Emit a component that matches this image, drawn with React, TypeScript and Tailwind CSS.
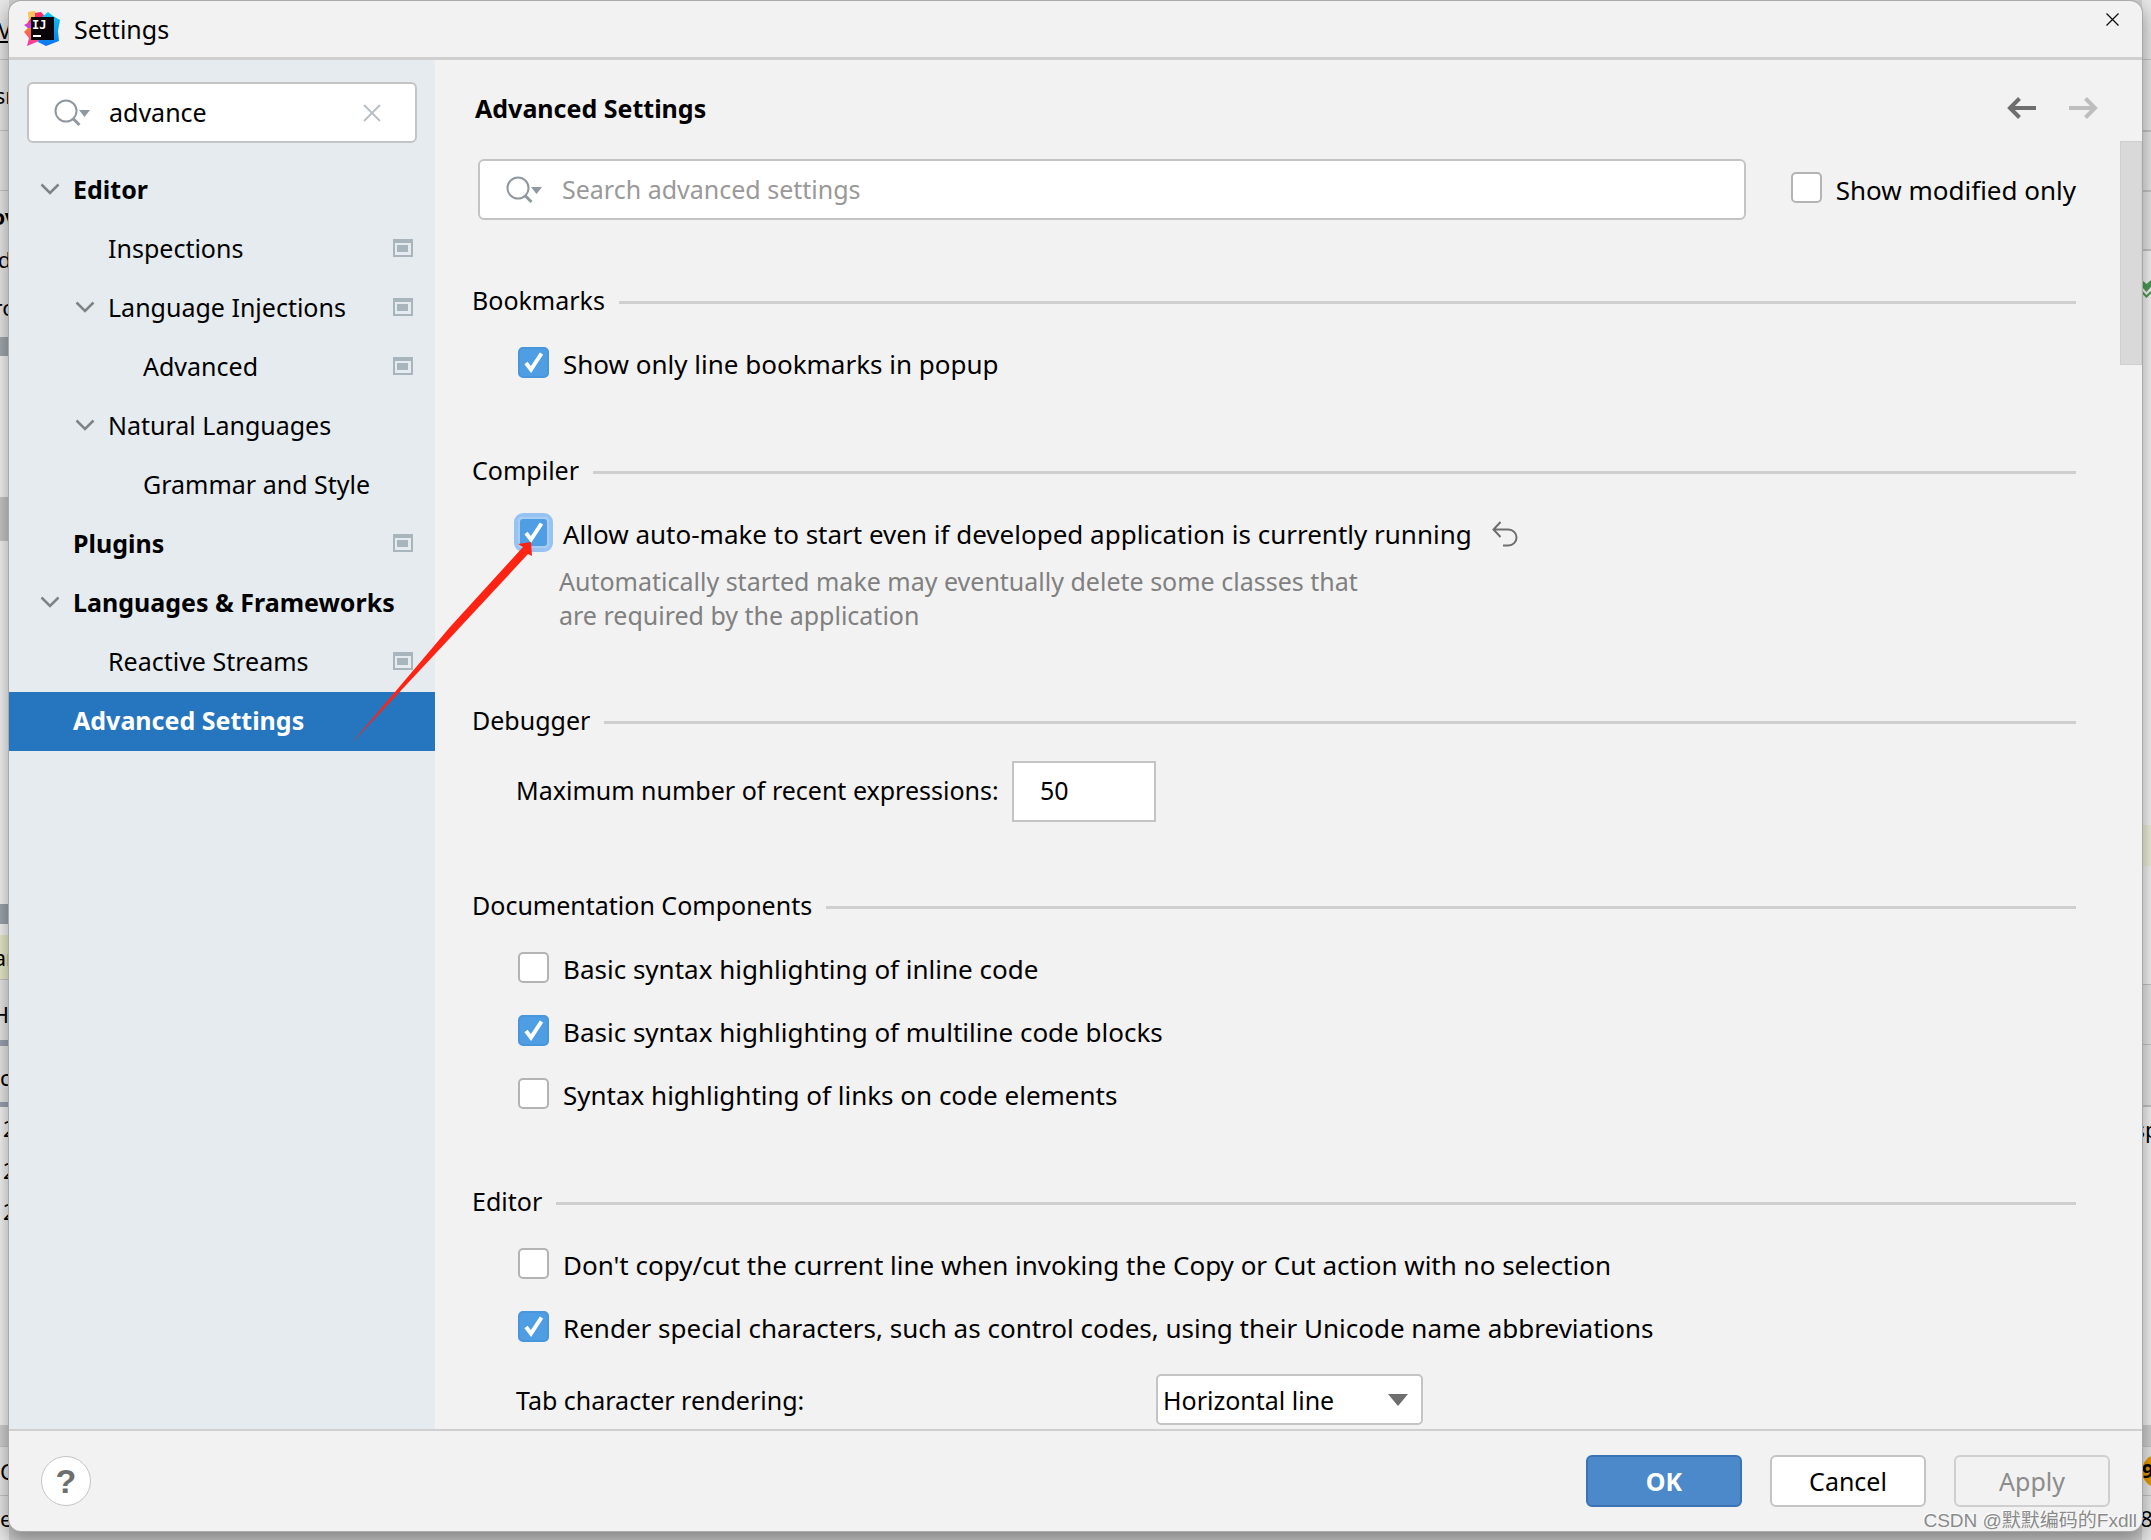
import React from 'react';
import clsx from 'clsx';

type TreeNode = {
	label: string;
	level: 0 | 1 | 2;
	open?: boolean;
	project?: boolean;
	selected?: boolean;
};

type Strip = {
	h: string;
	bg?: string;
	text?: string;
	cls?: string;
	node?: React.ReactNode;
};

const tree: TreeNode[] = [
	{ label: 'Editor', level: 0, open: true },
	{ label: 'Inspections', level: 1, project: true },
	{ label: 'Language Injections', level: 1, open: true, project: true },
	{ label: 'Advanced', level: 2, project: true },
	{ label: 'Natural Languages', level: 1, open: true },
	{ label: 'Grammar and Style', level: 2 },
	{ label: 'Plugins', level: 0, project: true },
	{ label: 'Languages & Frameworks', level: 0, open: true },
	{ label: 'Reactive Streams', level: 1, project: true },
	{ label: 'Advanced Settings', level: 0, selected: true },
];

// slices of the IDE window that stay visible on both sides of the dialog
const leftStrips: Strip[] = [
	{ h: 'h-[60px] border-b', text: 'V', cls: 'justify-center underline' },
	{ h: 'h-[71px] border-b', text: 'sr', cls: 'justify-center' },
	{ h: 'h-[60px] border-b' },
	{ h: 'h-[50px]', text: 'ov', cls: 'justify-center font-bold' },
	{ h: 'h-[36px]', text: 'd', cls: 'justify-center' },
	{ h: 'h-[60px]', text: 'ro', cls: 'justify-center' },
	{ h: 'h-[19px]', bg: 'bg-[#a0a8ae]' },
	{ h: 'h-[141px]', bg: 'bg-[#f2f2f2]' },
	{ h: 'h-[44px]', bg: 'bg-[#c6c6c6]' },
	{ h: 'h-[363px]', bg: 'bg-[#f2f2f2]' },
	{ h: 'h-[20px]', bg: 'bg-[#9ca5ad]' },
	{ h: 'h-[11px]', bg: 'bg-[#f2f2f2]' },
	{ h: 'h-[44px]', bg: 'bg-[#e8e8c8]', text: 'ar', cls: 'justify-center' },
	{ h: 'h-[61px] border-t pt-[8px]', text: 'H', cls: 'justify-end' },
	{ h: 'h-[6px]', bg: 'bg-[#9aa2b0]' },
	{ h: 'h-[56px] pt-[6px]', text: 'c' },
	{ h: 'h-[5px]', bg: 'bg-[#9aa2b0]' },
	{ h: 'h-[42px]', bg: 'bg-[#f2f2f2]', text: '2', cls: 'pl-[3px]' },
	{ h: 'h-[41px]', bg: 'bg-[#f2f2f2]', text: '2', cls: 'pl-[3px]' },
	{ h: 'h-[41px]', bg: 'bg-[#f2f2f2]', text: '2', cls: 'pl-[3px]' },
	{ h: 'h-[194px]', bg: 'bg-[#f2f2f2]' },
	{ h: 'h-[22px] border-b', bg: 'bg-[#cfcfcf]' },
	{ h: 'h-[49px] border-b', text: 'C' },
	{ h: 'h-[44px]', text: 'e' },
];

const rightStrips: Strip[] = [
	{ h: 'h-[60px] border-b' },
	{ h: 'h-[72px] border-b-2' },
	{ h: 'h-[60px] border-b-2' },
	{ h: 'h-[59px] border-b-2' },
	{
		h: 'h-[76px]',
		bg: 'bg-[#f4f4f4]',
		node: (
			<svg width="9" height="20" viewBox="0 0 9 20" className="shrink-0">
				<path d="M0 1 4.500 5 9 1V8L4.500 13 0 8Z" fill="#499c54" />
				<path d="M0 13 4.500 17.500 9 13" fill="none" stroke="#499c54" strokeWidth="2" />
			</svg>
		),
	},
	{ h: 'h-[498px]', bg: 'bg-[#f4f4f4]' },
	{ h: 'h-[41px]', bg: 'bg-[#eeeedb]' },
	{ h: 'h-[119px] border-b', bg: 'bg-[#f2f2f2]' },
	{ h: 'h-[60px] border-b' },
	{ h: 'h-[62px] border-b-2' },
	{ h: 'h-[44px]', bg: 'bg-[#f2f2f2]', text: 'sp', cls: 'justify-center' },
	{ h: 'h-[274px]', bg: 'bg-[#f2f2f2]' },
	{ h: 'h-[22px] border-b', bg: 'bg-[#cfcfcf]' },
	{
		h: 'h-[49px] border-b',
		node: (
			<span className="flex size-[34px] shrink-0 items-center rounded-full bg-[#e59700] text-[20px] font-bold">9</span>
		),
	},
	{ h: 'h-[44px]', text: '8', cls: 'justify-center' },
];

function Strips({ items }: { items: Strip[] }) {
	return (
		<div className="w-[9px] overflow-hidden">
			{items.map((s, i) => (
				<div
					key={i}
					className={clsx(
						'flex items-center overflow-hidden border-[#c4c4c4] text-[22px]',
						s.h,
						s.cls,
						s.bg ?? 'bg-[#e6e6e6]'
					)}
				>
					{s.node}
					{s.text}
				</div>
			))}
		</div>
	);
}

function IdeaLogo() {
	return (
		<svg width="36" height="36" viewBox="0 0 36 36" aria-hidden="true">
			<defs>
				<linearGradient id="warm" x1="0" y1="0" x2="0" y2="1">
					<stop offset="0" stopColor="#fcd84a" />
					<stop offset="0.5" stopColor="#fb7a2a" />
					<stop offset="1" stopColor="#f72fb5" />
				</linearGradient>
				<linearGradient id="cool" x1="0" y1="0" x2="0" y2="1">
					<stop offset="0" stopColor="#12c9f2" />
					<stop offset="1" stopColor="#0a74f0" />
				</linearGradient>
			</defs>
			<path d="M4 1 11 0 14 18 20 28 3 35 5 27 0 21 4 17 1 14 5 10Z" fill="url(#warm)" />
			<path d="M10 2 17 1 24 9 16 14 3 15 5 9Z" fill="#fb2b68" />
			<path d="M4 1 11 0 11 6 7 7 5 10Z" fill="#fbc35c" />
			<path d="M0 14 9 10 9 17 4 17Z" fill="#d43fd8" />
			<path d="M24 1 29 5 36 9 34 20 35 30 22 35 14 31 20 14 18 6Z" fill="url(#cool)" />
			<rect x="7" y="6" width="23" height="23" fill="#0b0408" />
			<text x="8" y="18" fontSize="12" fontWeight="700" fontFamily="'DejaVu Sans Mono', monospace" fill="#fff">
				IJ
			</text>
			<rect x="9" y="24" width="8" height="2" fill="#fff" />
		</svg>
	);
}

function SearchIcon() {
	return (
		<svg width="36" height="28" viewBox="0 0 36 28" aria-hidden="true">
			<circle cx="12" cy="12" r="10.5" fill="none" stroke="#8f989e" strokeWidth="2" />
			<path d="M19 19.500 25.500 26" stroke="#8f989e" strokeWidth="3" />
			<path d="M25 11H36L30.500 18Z" fill="#8f989e" />
		</svg>
	);
}

function Chevron() {
	return (
		<svg width="20" height="12" viewBox="0 0 20 12" aria-hidden="true">
			<path d="M1.500 1.500 10 10 18.500 1.500" fill="none" stroke="#7f8386" strokeWidth="2.500" />
		</svg>
	);
}

function ProjectIcon() {
	return (
		<svg width="20" height="18" viewBox="0 0 20 18" className="ml-auto" aria-hidden="true">
			<path d="M0 0H20V18H0ZM2 4V16H18V4Z" fill="#a9b5bd" fillRule="evenodd" />
			<rect x="4" y="6" width="11" height="7" fill="#a9b5bd" />
		</svg>
	);
}

type CheckProps = {
	label: string;
	checked?: boolean;
	focused?: boolean;
	children?: React.ReactNode;
};

function Check({ label, checked, focused, children }: CheckProps) {
	return (
		<div className="flex h-[60px] items-center pl-[2px] text-[26px]">
			<label className="flex items-center gap-[14px]">
				<span className="mb-[4px] grid place-items-center">
					<input
						type="checkbox"
						defaultChecked={checked}
						className={clsx(
							'peer col-start-1 row-start-1 size-[31px] appearance-none rounded-[5px] border-2 border-[#b4b4b4] bg-white checked:bg-[#4f9ee3]',
							focused ? 'outline-4 outline-[#97c3f3] checked:border-[#a8cdf5]' : 'checked:border-[#4896dc]'
						)}
					/>
					<svg
						width="20"
						height="22"
						viewBox="0 0 20 22"
						className="pointer-events-none invisible col-start-1 row-start-1 peer-checked:visible"
						aria-hidden="true"
					>
						<path d="M2 12 7 18.500 17.500 2.500" fill="none" stroke="#fff" strokeWidth="4" />
					</svg>
				</span>
				{label}
			</label>
			{children}
		</div>
	);
}

function Section({ title, children }: { title: string; children: React.ReactNode }) {
	return (
		<section className="mb-[58px] last:mb-0">
			<div className="mb-[16px] flex items-center gap-[14px]">
				<h2>{title}</h2>
				<div className="mt-[5px] h-[3px] flex-1 bg-[#cfcfcf]" />
			</div>
			<div className="flex flex-col gap-[3px] pl-[44px]">{children}</div>
		</section>
	);
}

function Sidebar() {
	return (
		<aside className="w-[426px] shrink-0 bg-[#e5ebee] pt-[22px]">
			<div className="mx-[18px] mb-[18px] flex h-[61px] items-center rounded-[6px] border-2 border-[#c4c4c4] bg-white pl-[25px] pr-[34px]">
				<SearchIcon />
				<input
					type="text"
					aria-label="Search settings"
					defaultValue="advance"
					className="ml-[19px] min-w-0 flex-1 pb-[2px] outline-none"
				/>
				<button aria-label="Clear search">
					<svg width="18" height="18" viewBox="0 0 18 18">
						<path d="M1 1 17 17M17 1 1 17" stroke="#b9c0c5" strokeWidth="2" />
					</svg>
				</button>
			</div>
			<ul>
				{tree.map((node) => (
					<li key={node.label}>
						<button
							className={clsx(
								'flex h-[59px] w-full items-center pb-[4px] pr-[22px] text-left',
								node.level === 0 && 'pl-[31px] font-bold',
								node.level === 1 && 'pl-[66px]',
								node.level === 2 && 'pl-[101px]',
								node.selected && 'bg-[#2675bf] text-white'
							)}
						>
							<span className="w-[33px] shrink-0">{node.open && <Chevron />}</span>
							<span className="whitespace-nowrap">{node.label}</span>
							{node.project && <ProjectIcon />}
						</button>
					</li>
				))}
			</ul>
		</aside>
	);
}

function Content() {
	return (
		<main className="flex min-w-0 flex-1 flex-col">
			<header className="flex h-[81px] items-center pl-[40px] pr-[44px] pt-[15px]">
				<h1 className="flex-1 font-bold">Advanced Settings</h1>
				<button aria-label="Back">
					<svg width="30" height="22" viewBox="0 0 30 22">
						<path d="M12.500 1.500 3 11 12.500 20.500M3 11H29" fill="none" stroke="#6e6e6e" strokeWidth="4" />
					</svg>
				</button>
				<button aria-label="Forward" disabled className="ml-[31px]">
					<svg width="30" height="22" viewBox="0 0 30 22">
						<path d="M17.500 1.500 27 11 17.500 20.500M27 11H1" fill="none" stroke="#bebebe" strokeWidth="4" />
					</svg>
				</button>
			</header>
			<div className="flex flex-1">
				<div className="min-w-0 flex-1 pb-[4px] pl-[37px] pr-[44px] pt-[18px]">
					<div className="mb-[62px] flex items-center pl-[6px]">
						<div className="flex h-[61px] flex-1 items-center rounded-[6px] border-2 border-[#c4c4c4] bg-white pl-[26px]">
							<SearchIcon />
							<input
								type="text"
								aria-label="Search advanced settings"
								placeholder="Search advanced settings"
								className="ml-[20px] min-w-0 flex-1 pb-[2px] outline-none placeholder:text-[#999999]"
							/>
						</div>
						<div className="ml-[43px]">
							<Check label="Show modified only" />
						</div>
					</div>

					<Section title="Bookmarks">
						<Check label="Show only line bookmarks in popup" checked />
					</Section>

					<Section title="Compiler">
						<Check label="Allow auto-make to start even if developed application is currently running" checked focused>
							<button aria-label="Reset to default" className="ml-[20px]">
								<svg width="26" height="26" viewBox="0 0 26 26">
									<path
										d="M8.500 1 1.500 8.500 8.500 16M1.500 8.500H16.500A8 8 0 0 1 16.500 24.500H11"
										fill="none"
										stroke="#6e6e6e"
										strokeWidth="2"
									/>
								</svg>
							</button>
						</Check>
						<p className="-mt-[3px] pb-[12px] pl-[43px] leading-[34px] text-[#808080]">
							Automatically started make may eventually delete some classes that
							<br />
							are required by the application
						</p>
					</Section>

					<Section title="Debugger">
						<div className="flex items-center pb-[7px] pt-[7px]">
							<label htmlFor="recent" className="w-[496px] pb-[3px]">
								Maximum number of recent expressions:
							</label>
							<input
								id="recent"
								type="text"
								defaultValue="50"
								className="h-[61px] w-[144px] border-2 border-[#c4c4c4] bg-white pb-[3px] pl-[26px] outline-none"
							/>
						</div>
					</Section>

					<Section title="Documentation Components">
						<Check label="Basic syntax highlighting of inline code" />
						<Check label="Basic syntax highlighting of multiline code blocks" checked />
						<Check label="Syntax highlighting of links on code elements" />
					</Section>

					<Section title="Editor">
						<Check label="Don't copy/cut the current line when invoking the Copy or Cut action with no selection" />
						<Check label="Render special characters, such as control codes, using their Unicode name abbreviations" checked />
						<div className="flex items-center pt-[13px]">
							<label htmlFor="tab-char" className="w-[640px]">
								Tab character rendering:
							</label>
							<div className="grid items-center">
								<select
									id="tab-char"
									defaultValue="Horizontal line"
									className="col-start-1 row-start-1 h-[51px] w-[267px] appearance-none rounded-[5px] border-2 border-[#c4c4c4] bg-white pl-[5px]"
								>
									<option>Horizontal line</option>
								</select>
								<svg
									width="20"
									height="12"
									viewBox="0 0 20 12"
									className="pointer-events-none col-start-1 row-start-1 mr-[15px] justify-self-end"
									aria-hidden="true"
								>
									<path d="M0 0H20L10 12Z" fill="#6e6e6e" />
								</svg>
							</div>
						</div>
					</Section>
				</div>
				<div className="h-[224px] w-[22px] border border-[#cfcfcf] bg-[#d9d9d9]" />
			</div>
		</main>
	);
}

export default function App() {
	return (
		<div className="relative flex min-h-screen flex-col overflow-hidden bg-[#cfcfcf] px-[9px] pb-[9px] pt-px font-['Noto_Sans','Noto_Sans_CJK_SC',sans-serif] text-[25px] leading-[36px] text-black">
			<div className="absolute inset-0 flex justify-between" aria-hidden="true">
				<Strips items={leftStrips} />
				<Strips items={rightStrips} />
			</div>

			<div className="relative flex flex-1 flex-col overflow-hidden rounded-[12px] bg-[#f2f2f2] shadow-[0_0_0_1px_#a9a9a9,0_8px_18px_2px_rgba(0,0,0,0.35)]">
				<div className="flex h-[59px] items-center border-b-3 border-[#cfcfcf] pl-[15px] pr-[23px]">
					<IdeaLogo />
					<span className="ml-[14px] flex-1">Settings</span>
					<button aria-label="Close" className="mb-[19px]">
						<svg width="13" height="13" viewBox="0 0 13 13">
							<path d="M0.500 0.500 12.500 12.500M12.500 0.500 0.500 12.500" stroke="#111" strokeWidth="1.300" />
						</svg>
					</button>
				</div>
				<div className="flex flex-1">
					<Sidebar />
					<Content />
				</div>
				<footer className="flex h-[102px] items-center border-t-2 border-[#cfcfcf] px-[32px]">
					<button
						aria-label="Help"
						className="size-[50px] rounded-full border border-[#c4c4c4] bg-white font-['Liberation_Sans',sans-serif] text-[34px] font-bold text-[#6e6e6e]"
					>
						?
					</button>
					<div className="ml-auto flex gap-[28px]">
						<button className="h-[52px] w-[156px] rounded-[6px] border-2 border-[#3a73b4] bg-[#4c89ca] font-bold text-white">
							OK
						</button>
						<button className="h-[52px] w-[156px] rounded-[6px] border-2 border-[#c4c4c4] bg-white">Cancel</button>
						<button disabled className="h-[52px] w-[156px] rounded-[6px] border-2 border-[#cfcfcf] text-[#8c8c8c]">
							Apply
						</button>
					</div>
				</footer>
			</div>

			{/* hand-drawn pointer to the compiler option */}
			<svg
				width="184"
				height="206"
				viewBox="350 540 184 206"
				className="pointer-events-none absolute left-[350px] top-[540px]"
				aria-hidden="true"
			>
				<path d="M351 744 450 627 523 547 518 544 531 542 532 556 528 554 450 638Z" fill="#ff2314" />
			</svg>
			<span className="absolute bottom-[4px] right-[14px] font-['Liberation_Sans','Noto_Sans_CJK_SC',sans-serif] text-[19px] leading-[30px] text-[#8a8a8a] [text-shadow:-1px_-1px_0_#fff]">
				CSDN @默默编码的Fxdll
			</span>
		</div>
	);
}
